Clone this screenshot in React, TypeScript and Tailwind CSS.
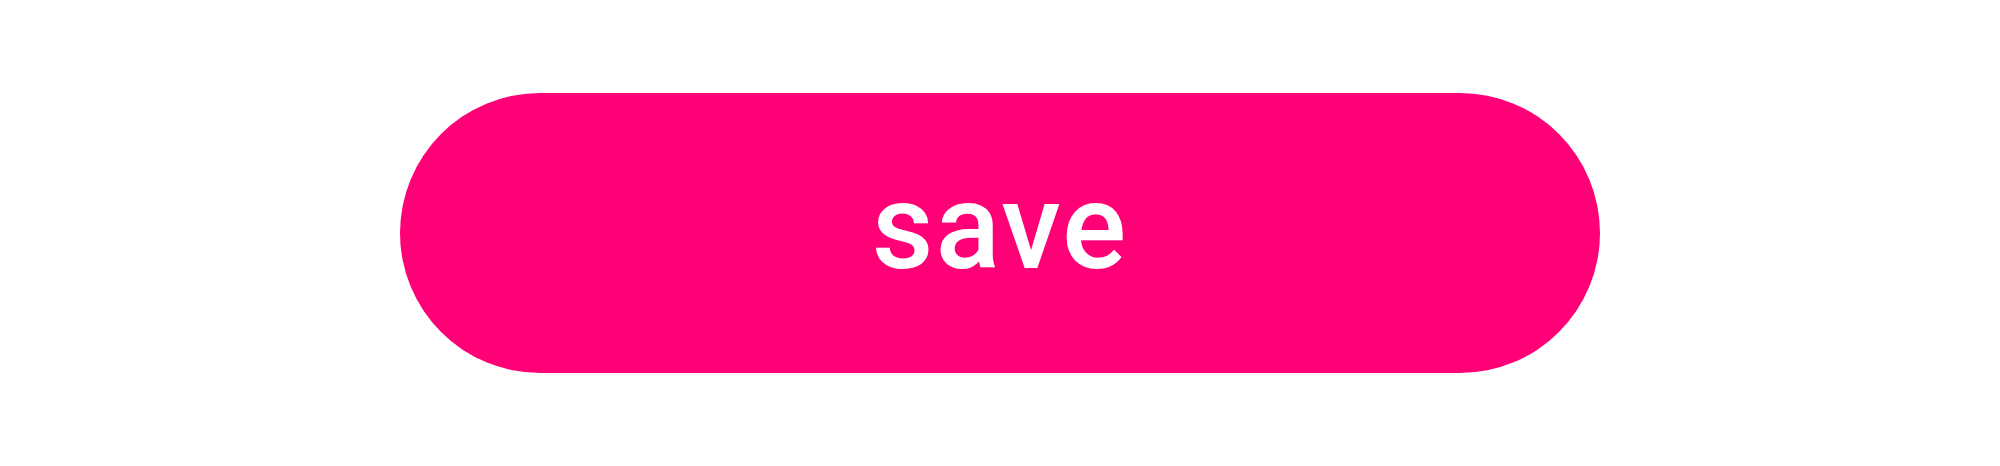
export default function App() {
  return (
    <main className="flex h-[466px] w-full items-center justify-center bg-white">
      {/* pill-shaped primary action */}
      <button
        type="button"
        className="flex h-[280px] w-[1200px] items-center justify-center rounded-full border-0 bg-[#ff0077] font-['Roboto',sans-serif] text-[120px] font-medium leading-none tracking-[2px] text-white"
      >
        <span className="pb-[12px]">save</span>
      </button>
    </main>
  );
}
